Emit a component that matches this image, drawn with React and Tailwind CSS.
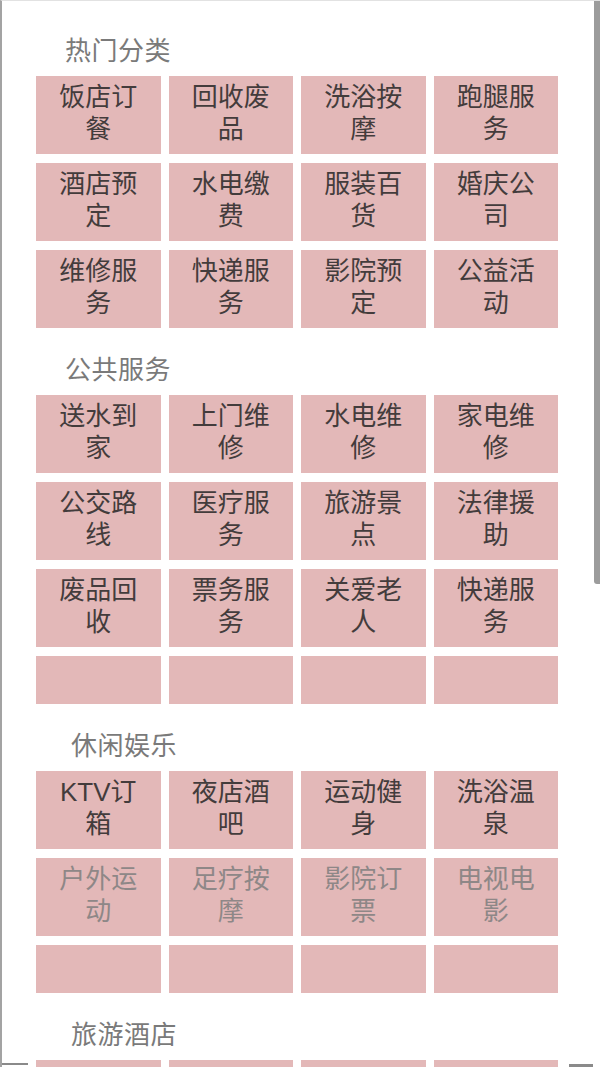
const sections = [
  {
    title: '热门分类',
    indent: 'pl-[29px]',
    rows: [
      [['饭店订', '餐'], ['回收废', '品'], ['洗浴按', '摩'], ['跑腿服', '务']],
      [['酒店预', '定'], ['水电缴', '费'], ['服装百', '货'], ['婚庆公', '司']],
      [['维修服', '务'], ['快递服', '务'], ['影院预', '定'], ['公益活', '动']],
    ],
  },
  {
    title: '公共服务',
    indent: 'pl-[29px]',
    rows: [
      [['送水到', '家'], ['上门维', '修'], ['水电维', '修'], ['家电维', '修']],
      [['公交路', '线'], ['医疗服', '务'], ['旅游景', '点'], ['法律援', '助']],
      [['废品回', '收'], ['票务服', '务'], ['关爱老', '人'], ['快递服', '务']],
      null,
    ],
  },
  {
    title: '休闲娱乐',
    indent: 'pl-[35px]',
    rows: [
      [['KTV订', '箱'], ['夜店酒', '吧'], ['运动健', '身'], ['洗浴温', '泉']],
      { muted: true, cells: [['户外运', '动'], ['足疗按', '摩'], ['影院订', '票'], ['电视电', '影']] },
      null,
    ],
  },
  {
    title: '旅游酒店',
    indent: 'pl-[35px]',
    // only the top edge of this row is on screen
    rows: [[[], [], [], []]],
  },
]

const Cell = ({ lines, muted }) => (
  <div className={`h-[78px] bg-[#e3b8b8] pt-[5px] flex flex-col items-center text-[26px] leading-[32px] ${muted ? 'text-[#8e8787]' : 'text-[#433c3c]'}`}>
    {lines.map((l, i) => (
      <span key={i} className="whitespace-nowrap">
        {l}
      </span>
    ))}
  </div>
)

const App = () => {
  return (
    <div
      className="relative h-[1067px] w-[600px] overflow-hidden bg-white border-l-[2px] border-[#a3a3a3] border-t border-t-[#e2e2e2]"
      style={{ fontFamily: '"Liberation Sans", "Noto Sans CJK SC", sans-serif' }}>
      <div className="pt-[8px] pl-[34px]">
        {sections.map((section) => (
          <div key={section.title} className="pt-[26px]">
            <h2 className={`${section.indent} text-[26px] leading-[32px] text-[#7a7a7a] font-normal mb-[9px] tracking-[0.5px]`}>{section.title}</h2>
            <div className="grid grid-cols-4 gap-x-[8px] gap-y-[9px] w-[522px]">
              {section.rows.map((row, ri) => {
                if (!row) {
                  return [0, 1, 2, 3].map((k) => <div key={`e${ri}${k}`} className="h-[48px] bg-[#e3b8b8]" />)
                }
                const cells = Array.isArray(row) ? row : row.cells
                const muted = !Array.isArray(row) && row.muted
                return cells.map((lines, ci) => <Cell key={`${ri}-${ci}`} lines={lines} muted={muted} />)
              })}
            </div>
          </div>
        ))}
      </div>
      {/* scrollbar */}
      <div className="absolute right-0 top-0 w-[6px] h-[583px] bg-[#9c9c9c] rounded-bl-[3px]" />
      <div className="absolute left-0 bottom-[2px] w-[26px] h-[2px] bg-[#8a8a8a]" />
      <div className="absolute left-[567px] bottom-0 w-[24px] h-[3px] bg-[#8a8a8a]" />
    </div>
  )
}

export default App
